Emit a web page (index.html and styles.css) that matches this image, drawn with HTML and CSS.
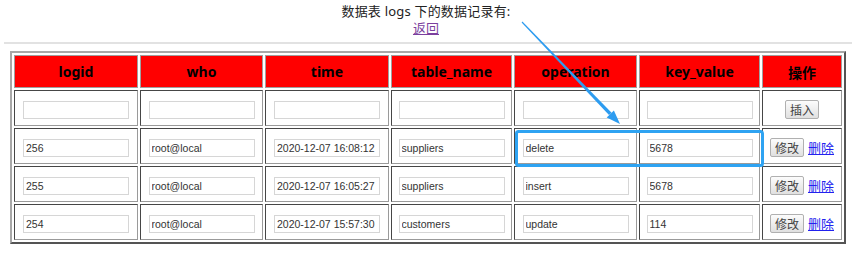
FILE: index.html
```html
<!DOCTYPE html>
<html lang="zh-CN">
<head>
    <meta charset="UTF-8">
    <title>logs 数据记录</title>
    <link rel="stylesheet" href="styles.css">
</head>
<body>
    <div class="heading">
        <div>数据表 logs 下的数据记录有:</div>
        <a href="#">返回</a>
    </div>
    <hr class="divider">
    <table class="records">
        <colgroup>
            <col class="c1"><col class="c2"><col class="c3"><col class="c4"><col class="c5"><col class="c6"><col class="c7">
        </colgroup>
        <tr>
            <th>logid</th>
            <th>who</th>
            <th>time</th>
            <th>table_name</th>
            <th>operation</th>
            <th>key_value</th>
            <th>操作</th>
        </tr>
        <tr>
            <td><input type="text"></td>
            <td><input type="text"></td>
            <td><input type="text"></td>
            <td><input type="text"></td>
            <td><input type="text"></td>
            <td><input type="text"></td>
            <td><button class="btn">插入</button></td>
        </tr>
        <tr>
            <td><input type="text" value="256"></td>
            <td><input type="text" value="root@local"></td>
            <td><input type="text" value="2020-12-07 16:08:12"></td>
            <td><input type="text" value="suppliers"></td>
            <td><input type="text" value="delete"></td>
            <td><input type="text" value="5678"></td>
            <td><button class="btn">修改</button><a class="del" href="#">删除</a></td>
        </tr>
        <tr>
            <td><input type="text" value="255"></td>
            <td><input type="text" value="root@local"></td>
            <td><input type="text" value="2020-12-07 16:05:27"></td>
            <td><input type="text" value="suppliers"></td>
            <td><input type="text" value="insert"></td>
            <td><input type="text" value="5678"></td>
            <td><button class="btn">修改</button><a class="del" href="#">删除</a></td>
        </tr>
        <tr>
            <td><input type="text" value="254"></td>
            <td><input type="text" value="root@local"></td>
            <td><input type="text" value="2020-12-07 15:57:30"></td>
            <td><input type="text" value="customers"></td>
            <td><input type="text" value="update"></td>
            <td><input type="text" value="114"></td>
            <td><button class="btn">修改</button><a class="del" href="#">删除</a></td>
        </tr>
    </table>

    <!-- annotation drawn over the screenshot -->
    <svg class="annotation" width="852" height="261" viewBox="0 0 852 261">
        <rect x="516.5" y="131.5" width="246" height="34" rx="2" fill="none" stroke="#2ea3f2" stroke-width="3"/>
        <polygon points="521.6,22.4 522.4,21.6 611.6,112.7 609.0,115.1" fill="#2d9cf0"/>
        <polygon points="620,124 606.7,117.4 613.9,110.4" fill="#2d9cf0"/>
    </svg>
</body>
</html>
```

FILE: styles.css
```css
* {
    box-sizing: border-box;
}

body {
    margin: 0;
    width: 852px;
    height: 261px;
    overflow: hidden;
    position: relative;
    background-color: #ffffff;
    font-family: "Noto Sans", "Noto Sans CJK SC", sans-serif;
    color: #222222;
}

.heading {
    text-align: center;
    font-size: 13px;
    line-height: 17px;
    padding-top: 3px;
}

.heading div {
    letter-spacing: 0.2px;
}

.heading a {
    display: inline-block;
    line-height: 16px;
    color: #7b3f9e;
}

.divider {
    margin: 5px 0 7px 4px;
    border: 0;
    border-top: 2px solid #e2e2e2;
    height: 0;
}

.records {
    margin-left: 10px;
    width: 836px;
    table-layout: fixed;
    border-collapse: separate;
    border-spacing: 2px;
    border: 2px outset #a8a8a8;
}

.c1 { width: 124px; }
.c2 { width: 123px; }
.c3 { width: 124px; }
.c4 { width: 121px; }
.c5 { width: 123px; }
.c6 { width: 121px; }
.c7 { width: 80px; }

.records th {
    background-color: #ff0000;
    height: 33px;
    padding: 0;
    font-size: 14px;
    font-weight: bold;
    color: #000000;
    border: 1px solid #a0a0a0;
}

.records td {
    height: 36px;
    padding: 0;
    text-align: center;
    border: 1px inset #9a9a9a;
}

.records input[type="text"] {
    width: 106px;
    height: 18px;
    margin: 0;
    padding: 1px 1px 1px 2px;
    border: 1px solid #d6d6d6;
    background-color: #ffffff;
    font: 10.5px "Liberation Sans", Arial, sans-serif;
    color: #333333;
    vertical-align: middle;
}

.btn {
    height: 19px;
    padding: 0 4px;
    margin: 0;
    border: 1px solid #b0b0b0;
    border-radius: 2px;
    background: linear-gradient(#fcfcfc, #e0e0e0);
    font: 12px "Noto Sans CJK SC", sans-serif;
    line-height: 16px;
    color: #444444;
    vertical-align: middle;
}

.del {
    margin-left: 4px;
    font-size: 13px;
    color: #2222ee;
    vertical-align: middle;
}

.annotation {
    position: absolute;
    top: 0;
    left: 0;
    pointer-events: none;
}
```
